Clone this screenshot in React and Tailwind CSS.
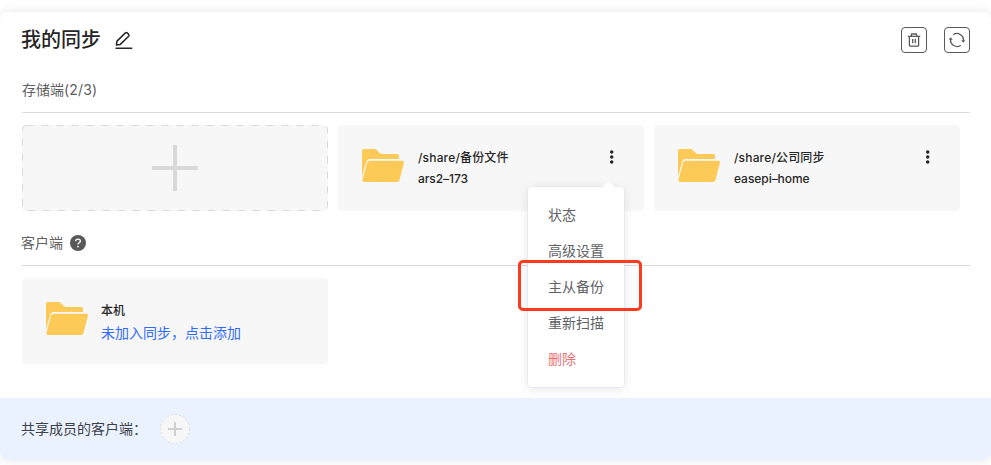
import React from "react";

const FONT = "font-['Inter','Noto_Sans_CJK_SC',sans-serif]";

function Folder() {
  return (
    <svg className="h-[34px] w-[44px] shrink-0" viewBox="0 0 44 34" fill="#fdca57">
      <path d="M1 24V2.7Q1 1 2.7 1H13.5Q14.7 1 15.5 1.8L18.7 5.1Q19.5 5.9 20.7 5.9H36.3Q38 5.9 38 7.5V11H8.7Q6.1 11 5.3 13.4L1 28.4Z" />
      <path d="M8.8 12.7H41.3Q43.5 12.7 42.9 14.8L38.4 32.2Q37.8 34 35.9 34H3.1Q0.9 34 1.4 32L6.1 14.6Q6.7 12.7 8.8 12.7Z" />
    </svg>
  );
}

function Divider() {
  return <div className="h-px w-[948px] bg-[#d9d9d9]" />;
}

function Dots() {
  return (
    <svg className="mt-[25px] h-[14px] w-[5px]" viewBox="0 0 5 14" fill="#262626">
      <circle cx="2.7" cy="1.9" r="1.75" />
      <circle cx="2.7" cy="7" r="1.75" />
      <circle cx="2.7" cy="12.1" r="1.75" />
    </svg>
  );
}

function Card({ path, name, children }) {
  return (
    <div className="relative flex h-[86px] w-[306px] items-start rounded bg-[#f7f7f7] pl-[23px] pr-[30px]">
      <div className="mt-[23px]">
        <Folder />
      </div>
      <div className="ml-[13px] mt-[22px] flex-1 whitespace-nowrap text-[12px] font-medium leading-[21px] text-[#262626]">
        <div className="tracking-[0.17px]">{path}</div>
        <div className="tracking-[-0.05px]">{name}</div>
      </div>
      <Dots />
      {children}
    </div>
  );
}

const ITEMS = ["状态", "高级设置", "主从备份", "重新扫描", "删除"];

function Menu() {
  return (
    <div className="absolute left-[190px] top-[62px] z-10 h-[200px] w-[96px] rounded bg-white pt-[10px] shadow-[0_2px_12px_rgba(0,0,0,0.1),0_0_0_1px_rgba(235,238,250,0.6)]">
      <div className="absolute left-[76px] top-[-4px] size-[9px] rotate-45 rounded-tl-[2px] bg-white" />
      {ITEMS.map((t) => (
        <div
          key={t}
          className={
            "relative h-9 pl-5 text-[14px] leading-9 " +
            (t === "删除" ? "text-[#ee7276]" : "text-[#606266]")
          }
        >
          {t}
        </div>
      ))}
      <div className="absolute left-[-10px] top-[73px] h-[51px] w-[124px] rounded-[5px] border-3 border-[#fb3b20]" />
    </div>
  );
}

export default function App() {
  return (
    <div className={"h-[465px] w-[991px] overflow-hidden bg-white pt-3 " + FONT}>
      <div className="flex h-[448px] w-[991px] flex-col overflow-hidden rounded-lg bg-white shadow-[0_0_12px_rgba(0,0,0,0.1)]">
        <header className="flex h-14 items-center pl-[21px] pr-[21px]">
          <h1 className="text-[20px] font-medium leading-none text-[#262626]">我的同步</h1>
          <svg className="ml-[14px] size-[18px]" viewBox="0 0 18 18" fill="none" stroke="#262626" strokeWidth="1.5" strokeLinejoin="round">
            <path d="M1.4 14.1L2 10.1L10.4 1.9Q11.3 1.1 12.2 1.9L13.7 3.4Q14.5 4.3 13.7 5.2L5.3 13.4Z" />
            <path d="M0.5 17.3H17.3" />
          </svg>
          <div className="ml-auto flex gap-[17px]">
            <button className="flex size-[26px] items-center justify-center rounded-[4px] border border-[#595959]">
              <svg className="size-[14px]" viewBox="0 0 14 14" fill="none" stroke="#595959" strokeWidth="1.3">
                <path d="M0.8 3.3H13.2M4 3.3L4.7 1H9.3L10 3.3M2.4 3.3V12.2Q2.4 13.2 3.4 13.2H10.6Q11.6 13.2 11.6 12.2V3.3M5.7 6V10.3M8.3 6V10.3" />
              </svg>
            </button>
            <button className="flex size-[26px] items-center justify-center rounded-[4px] border border-[#595959]">
              <svg className="size-[16px]" viewBox="0 0 16 16" fill="none" stroke="#595959" strokeWidth="1.3">
                <path d="M4.2 2.7A6.5 6.5 0 0 1 14.4 8.9M11.8 13.3A6.5 6.5 0 0 1 1.6 7.1" />
                <path d="M12.2 8.3H16.2L14.3 10.7ZM-0.2 7.7H3.8L1.7 5.3Z" fill="#595959" stroke="none" />
              </svg>
            </button>
          </div>
        </header>
        <section className="pl-[22px]">
          <div className="h-11 pt-[11px] text-[14px] leading-[22px] text-[#606060]">
            存储端<span className="tracking-[0.15px]">(2/3)</span>
          </div>
          <Divider />
          <div className="mt-3 flex gap-[10px]">
            <div className="flex h-[86px] w-[306px] rounded bg-[#f7f7f7]">
              <svg className="h-[86px] w-[306px]" viewBox="0 0 306 86" fill="none" stroke="#d9d9d9">
                <rect x="0.5" y="0.5" width="305" height="85" rx="4" strokeDasharray="7 8" />
                <path d="M130 43H176M153 20V66" strokeWidth="4" />
              </svg>
            </div>
            <Card path="/share/备份文件" name="ars2–173">
              <Menu />
            </Card>
            <Card path="/share/公司同步" name="easepi–home" />
          </div>
        </section>
        <section className="pl-[22px]">
          <div className="flex h-[54px] items-center pt-[10px] text-[14px] leading-[22px] text-[#606060]">
            <span className="-ml-px">客户端</span>
            <svg className="ml-[7px] size-4" viewBox="0 0 16 16">
              <circle cx="8" cy="8" r="8" fill="#595959" />
              <path d="M5.7 6.2Q5.8 4.1 8 4.1Q10.3 4.1 10.3 6Q10.3 7.2 9 7.9Q8 8.4 8 9.6" fill="none" stroke="#fff" strokeWidth="1.4" />
              <circle cx="8" cy="11.6" r="0.9" fill="#fff" />
            </svg>
          </div>
          <Divider />
          <div className="mt-3 flex h-[86px] w-[306px] items-start rounded bg-[#f7f7f7] pl-[23px]">
            <div className="mt-[23px]">
              <Folder />
            </div>
            <div className="ml-[12px] mt-[22px] whitespace-nowrap">
              <div className="text-[12px] font-medium leading-[21px] text-[#262626]">本机</div>
              <div className="text-[14px] leading-[24px] text-[#2f6bff]">未加入同步，点击添加</div>
            </div>
          </div>
        </section>
        <footer className="mt-auto flex h-[62px] items-center bg-[#ebf2ff] pl-[21px] text-[14px] text-[#3b3f47]">
          <span className="-mt-0.5 w-[139px] whitespace-nowrap">共享成员的客户端：</span>
          <svg className="size-[30px]" viewBox="0 0 30 30">
            <circle cx="15" cy="15" r="14.5" fill="#f7f7f7" stroke="#d9d9d9" strokeDasharray="2 2" />
            <path d="M8 15H22M15 8V22" stroke="#d0d0d0" strokeWidth="2" />
          </svg>
        </footer>
      </div>
    </div>
  );
}
